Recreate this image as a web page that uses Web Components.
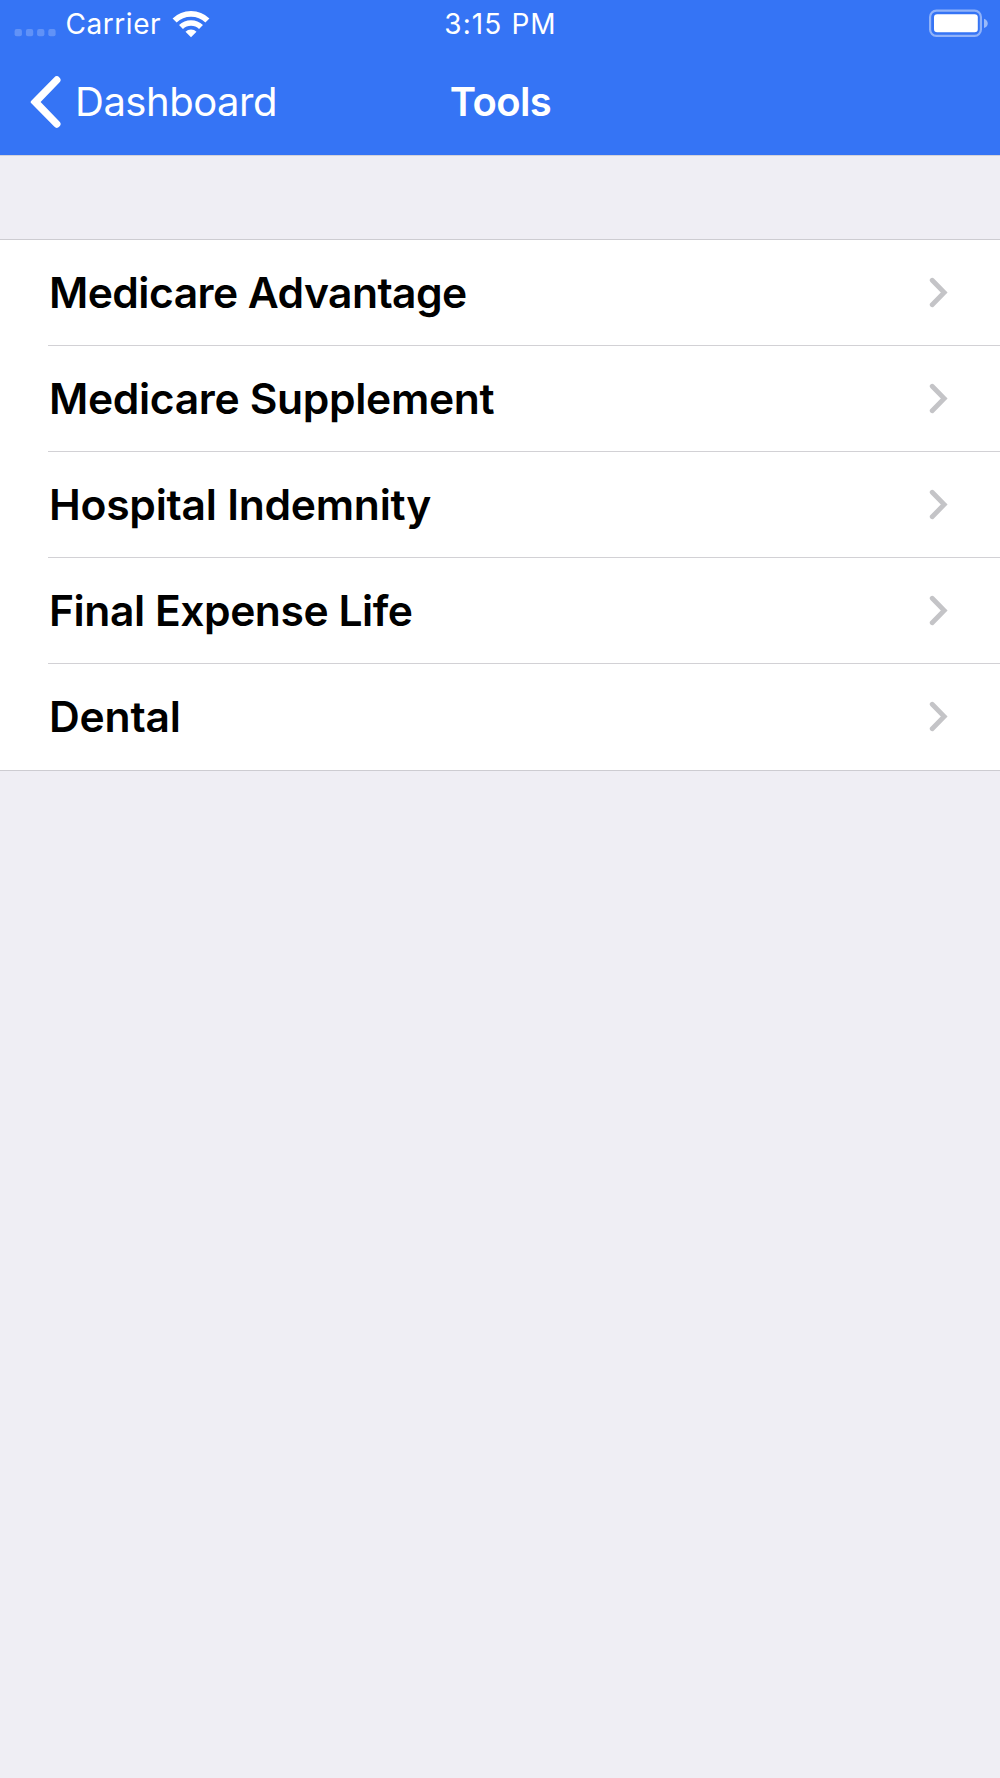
<!DOCTYPE html>
<html lang="en">
<head>
<meta charset="utf-8">
<title>Tools</title>
<style>
    body {
        margin: 0;
        min-height: 1778px;
        background: #efeef4;
        font-family: Inter, "Liberation Sans", sans-serif;
    }
    tools-list {
        margin-top: 83px;
    }
</style>
</head>
<body>
<status-bar carrier="Carrier" time="3:15 PM"></status-bar>
<nav-bar back="Dashboard">Tools</nav-bar>
<tools-list>
    <tools-row style="--spacing: -0.56px">Medicare Advantage</tools-row>
    <tools-row style="--spacing: -0.34px">Medicare Supplement</tools-row>
    <tools-row style="--spacing: -0.25px">Hospital Indemnity</tools-row>
    <tools-row style="--spacing: -0.45px">Final Expense Life</tools-row>
    <tools-row style="--spacing: -0.2px">Dental</tools-row>
</tools-list>

<script>
class StatusBar extends HTMLElement {
    constructor() {
        super();
        this.attachShadow({ mode: 'open' });
    }

    connectedCallback() {
        this.shadowRoot.innerHTML = `
            <style>
                :host {
                    display: grid;
                    grid-template-columns: 1fr auto 1fr;
                    align-items: center;
                    height: 48px;
                    background: #3574f5;
                    color: white;
                    font-size: 28px;
                    line-height: 34px;
                    white-space: nowrap;
                }
                svg {
                    display: block;
                }
                .left {
                    display: flex;
                    align-items: center;
                    padding-left: 14px;
                }
                .carrier {
                    margin: 0 10.6px 0 9.4px;
                    letter-spacing: 0.58px;
                }
                .time {
                    padding-left: 1px;
                    letter-spacing: 1.1px;
                }
                .battery {
                    justify-self: end;
                    padding-right: 11px;
                }
            </style>
            <div class="left">
                <svg width="42" height="48" viewBox="14 0 42 48" fill="#fff" fill-opacity=".22">
                    <rect x="14.6" y="29" width="7.3" height="7.2" rx="2"/>
                    <rect x="25.9" y="29" width="7.3" height="7.2" rx="2"/>
                    <rect x="37.1" y="29" width="7.3" height="7.2" rx="2"/>
                    <rect x="48.3" y="29" width="7.3" height="7.2" rx="2"/>
                </svg>
                <span class="carrier">${this.getAttribute('carrier')}</span>
                <svg width="38" height="48" viewBox="172 0 38 48" fill="none" stroke="#fff">
                    <path d="M174.6 20.5a23.4 23.4 0 0 1 32.8 0" stroke-width="5.8"/>
                    <path d="M181 27.1a14.3 14.3 0 0 1 20 0" stroke-width="5.6"/>
                    <path d="M191 37.2l-5.5-5.5a7.8 7.8 0 0 1 11 0z" fill="#fff" stroke="none"/>
                </svg>
            </div>
            <span class="time">${this.getAttribute('time')}</span>
            <svg class="battery" width="60" height="48" viewBox="929 0 60 48">
                <rect x="930.1" y="10.6" width="50.8" height="25.2" rx="6.3" fill="none" stroke="#fff" stroke-opacity=".45" stroke-width="2.2"/>
                <rect x="934" y="14.3" width="43.8" height="18" rx="3.2" fill="#fff"/>
                <path d="M984 18.7c5 1.6 5 7.8 0 9.4z" fill="#fff" fill-opacity=".5"/>
            </svg>
        `;
    }
}

class NavBar extends HTMLElement {
    constructor() {
        super();
        this.attachShadow({ mode: 'open' });
    }

    connectedCallback() {
        this.shadowRoot.innerHTML = `
            <style>
                :host {
                    display: grid;
                    grid-template-columns: 1fr auto 1fr;
                    align-items: center;
                    height: 107px;
                    background: #3574f5;
                    border-bottom: 1px solid #d3d2da;
                    color: white;
                    font-size: 40px;
                    line-height: 49px;
                    white-space: nowrap;
                }
                .back {
                    display: flex;
                    align-items: center;
                    gap: 13px;
                    padding-left: 30px;
                    letter-spacing: -0.48px;
                }
                .title {
                    padding-left: 1px;
                    font-weight: 600;
                    letter-spacing: -0.6px;
                }
            </style>
            <div class="back">
                <svg width="32" height="52" viewBox="0 0 32 52" fill="#fff">
                    <path d="M24.2 1.4a3.6 3.6 0 0 1 5.2 5.2L10.6 26l18.8 19.4a3.6 3.6 0 0 1-5.2 5.2L1.3 27.3a1.8 1.8 0 0 1 0-2.6z"/>
                </svg>
                <span>${this.getAttribute('back')}</span>
            </div>
            <div class="title"><slot></slot></div>
        `;
    }
}

class ToolsList extends HTMLElement {
    constructor() {
        super();
        this.attachShadow({ mode: 'open' });
        this.shadowRoot.innerHTML = `
            <style>
                :host {
                    display: grid;
                    grid-auto-rows: 106px;
                    border-top: 1px solid #cdccd1;
                    border-bottom: 1px solid #cdccd1;
                    background: white;
                }
                ::slotted(:last-child) {
                    --line: transparent;
                }
            </style>
            <slot></slot>
        `;
    }
}

class ToolsRow extends HTMLElement {
    constructor() {
        super();
        this.attachShadow({ mode: 'open' });
        this.shadowRoot.innerHTML = `
            <style>
                :host {
                    display: flex;
                    align-items: center;
                    justify-content: space-between;
                    margin-left: 48px;
                    padding: 0 52px 0 1px;
                    border-bottom: 1px solid var(--line, #d2d1d5);
                    color: black;
                    font-size: 42.6px;
                    font-weight: 600;
                    line-height: 51px;
                    letter-spacing: var(--spacing);
                }
            </style>
            <span><slot></slot></span>
            <svg width="19" height="31" viewBox="0 0 19 31" fill="none" stroke="#c4c4c7" stroke-width="4.8" stroke-linecap="round">
                <path d="M3.2 3.3L15.2 15.5L3.2 27.7"/>
            </svg>
        `;
    }
}

customElements.define('status-bar', StatusBar);
customElements.define('nav-bar', NavBar);
customElements.define('tools-list', ToolsList);
customElements.define('tools-row', ToolsRow);
</script>
</body>
</html>
